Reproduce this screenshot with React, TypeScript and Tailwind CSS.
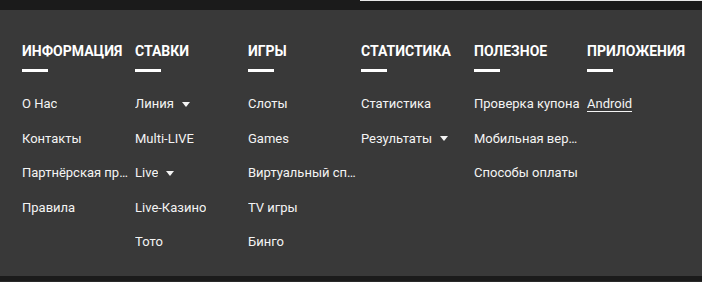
import React from 'react';

type Item = { label: string; caret?: boolean; underline?: boolean };
type Column = { title: string; items: Item[] };

const columns: Column[] = [
  {
    title: 'ИНФОРМАЦИЯ',
    items: [{ label: 'О Нас' }, { label: 'Контакты' }, { label: 'Партнёрская программа' }, { label: 'Правила' }],
  },
  {
    title: 'СТАВКИ',
    items: [
      { label: 'Линия', caret: true },
      { label: 'Multi-LIVE' },
      { label: 'Live', caret: true },
      { label: 'Live-Казино' },
      { label: 'Тото' },
    ],
  },
  {
    title: 'ИГРЫ',
    items: [
      { label: 'Слоты' },
      { label: 'Games' },
      { label: 'Виртуальный спорт' },
      { label: 'TV игры' },
      { label: 'Бинго' },
    ],
  },
  {
    title: 'СТАТИСТИКА',
    items: [{ label: 'Статистика' }, { label: 'Результаты', caret: true }],
  },
  {
    title: 'ПОЛЕЗНОЕ',
    items: [{ label: 'Проверка купона' }, { label: 'Мобильная версия' }, { label: 'Способы оплаты' }],
  },
  {
    title: 'ПРИЛОЖЕНИЯ',
    items: [{ label: 'Android', underline: true }],
  },
];

function Caret() {
  return (
    <svg width="8" height="5" viewBox="0 0 8 5" className="ml-[8px] shrink-0">
      <path d="M0 0h8L4 5z" fill="#f4f4f4" />
    </svg>
  );
}

export default function App() {
  return (
    <div className="w-[702px] h-[282px] flex flex-col bg-[#393939] font-['Roboto',sans-serif]">
      {/* top strip */}
      <div className="h-[10px] bg-[#1b1b1b] flex">
        <div className="w-[360px]" />
        <div className="flex-1 h-px bg-[#e8e8e8]" />
      </div>

      <div className="flex-1 flex pl-[22px] pt-[32px]">
        {columns.map((col) => (
          <div key={col.title} className="w-[113px] shrink-0 pr-[4px]">
            <div className="text-[14px] leading-[18px] font-bold text-white whitespace-nowrap">{col.title}</div>
            <div className="mt-[9px] w-[26px] h-[3px] bg-white" />
            <ul className="mt-[15px]">
              {col.items.map((it) => (
                <li key={it.label} className="h-[34.5px] flex items-center text-[13px] text-[#f4f4f4]">
                  <span
                    className={
                      'truncate leading-[18px] ' + (it.underline ? 'underline underline-offset-[3px]' : '')
                    }
                  >
                    {it.label}
                  </span>
                  {it.caret && <Caret />}
                </li>
              ))}
            </ul>
          </div>
        ))}
      </div>

      {/* bottom strip */}
      <div className="h-[6px] bg-[#1b1b1b] flex flex-col">
        <div className="flex-1" />
        <div className="h-px bg-[#2a2a2a]" />
      </div>
    </div>
  );
}
